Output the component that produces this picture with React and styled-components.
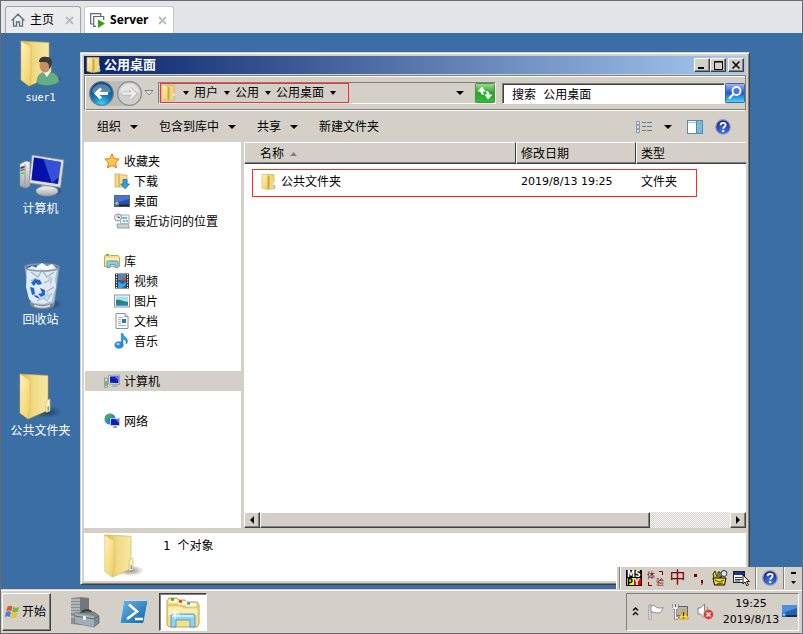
import React, { useState } from 'react';
import styled, { createGlobalStyle, css } from 'styled-components';

const GlobalStyle = createGlobalStyle`
  * {
    box-sizing: border-box;
  }

  body {
    margin: 0;
    font-family: "DejaVu Sans Mono", "Noto Sans CJK SC", sans-serif;
    font-size: 12px;
    line-height: 16px;
    color: #000;
  }

  button, input {
    font: inherit;
    color: inherit;
    border: none;
    padding: 0;
    margin: 0;
    background: none;
  }

  svg {
    display: block;
    flex: none;
  }
`;

// Classic raised / sunken edges
const raised = css`
  background: #d4d0c8;
  border: 1px solid;
  border-color: #fff #404040 #404040 #fff;
  box-shadow: inset -1px -1px 0 #808080;
`;

const sunken = css`
  border: 1px solid;
  border-color: #808080 #fff #fff #808080;
`;

const Screen = styled.div`
  min-height: 100vh;
  display: flex;
  flex-direction: column;
  border: 1px solid #6a6a70;
  background: #d4d0c8;
`;

/* ---------- tabs ---------- */

const TabBar = styled.div`
  display: flex;
  align-items: flex-end;
  gap: 3px;
  height: 32px;
  padding-left: 4px;
  background: #e4e5e8;
`;

const Tab = styled.div`
  display: flex;
  align-items: center;
  height: 27px;
  padding: 0 6px 0 5px;
  border: 1px solid #a3a4a8;
  border-bottom: none;
  border-radius: 3px 3px 0 0;
  background: ${props => (props.$active ? '#fff' : '#ebecee')};
  border-color: ${props => (props.$active ? '#c6c7ca' : '#a3a4a8')};
`;

const TabButton = styled.button`
  display: flex;
  align-items: center;
  gap: 5px;
  font-family: "Open Sans", "Noto Sans CJK SC", sans-serif;
  font-weight: ${props => (props.$active ? 700 : 400)};
`;

const TabClose = styled.button`
  margin-left: ${props => (props.$active ? '9px' : '11px')};
`;

/* ---------- desktop ---------- */

const Desktop = styled.main`
  position: relative;
  flex: 1;
  display: flex;
  padding: 0 52px 4px 0;
  background: #3a6ea5;
`;

const Shortcuts = styled.div`
  display: flex;
  flex-direction: column;
  align-items: center;
  gap: 42px;
  width: 79px;
  padding-top: 6px;
  flex: none;
`;

const Shortcut = styled.button`
  display: flex;
  flex-direction: column;
  align-items: center;
  gap: 1px;
  color: #fff;
  line-height: 20px;
  white-space: nowrap;
`;

const Latin = styled.span`
  font-size: 10px;
`;

const Window = styled.section`
  flex: 1;
  min-width: 0;
  display: flex;
  flex-direction: column;
  margin-top: 19px;
  padding: 3px;
  border: 1px solid;
  border-color: #d4d0c8 #404040 #404040 #d4d0c8;
  box-shadow: inset 1px 1px 0 #fff, inset -1px -1px 0 #808080;
  background: #d4d0c8;
`;

const TitleBar = styled.header`
  display: flex;
  align-items: center;
  height: 18px;
  margin-bottom: 1px;
  padding: 0 2px;
  background: linear-gradient(90deg, #0a246a, #a6caf0);
`;

const Title = styled.h1`
  flex: 1;
  margin: 0 0 0 2px;
  font-size: 13px;
  line-height: 18px;
  color: #fff;
`;

const TitleButton = styled.button`
  ${raised}
  width: 16px;
  height: 14px;
  margin-left: ${props => (props.$apart ? '2px' : '0')};
  display: flex;
  align-items: center;
  justify-content: center;
`;

const AddressBand = styled.div`
  display: flex;
  align-items: center;
  height: 36px;
  padding-left: 4px;
  border: 1px solid #808080;
  box-shadow: inset 1px 1px 0 #fff, inset 0 -1px 0 #808080;
  border-bottom-color: #fff;
`;

const NavButtons = styled.div`
  display: flex;
  gap: 3px;
  border-radius: 13px;
  background: #bebcb6;
`;

const History = styled.button`
  width: 10px;
  margin: 0 4px 0 2px;
`;

const AddressField = styled.div`
  ${sunken}
  flex: 1;
  display: flex;
  align-items: center;
  height: 22px;
  padding-left: 1px;
`;

const Crumbs = styled.nav`
  display: flex;
  align-items: center;
  align-self: stretch;
  padding-right: 7px;
  border: 1px solid #ff2a2a;
`;

const Crumb = styled.button`
  display: flex;
  align-items: center;
  line-height: 18px;
`;

const CrumbArrow = styled.span`
  display: flex;
  justify-content: center;
  width: 17px;
`;

const AddressDrop = styled.button`
  margin-left: auto;
  padding: 0 11px;
`;

const Search = styled.form`
  display: flex;
  align-items: center;
  width: 243px;
  margin-left: 6px;
`;

const SearchInput = styled.input`
  ${sunken}
  flex: 1;
  min-width: 0;
  height: 21px;
  padding: 0 9px;
  background: #fff;
  box-shadow: inset 1px 1px 0 #404040;
`;

const Toolbar = styled.div`
  display: flex;
  align-items: center;
  gap: 21px;
  height: 31px;
  padding: 0 15px 0 13px;
`;

const ToolButton = styled.button`
  display: flex;
  align-items: center;
  gap: ${props => (props.$wide ? '12px' : '9px')};
  padding-right: ${props => (props.$wide ? '3px' : '0')};
`;

const ToolIcons = styled.div`
  display: flex;
  align-items: center;
  gap: 12px;
  margin-left: auto;
`;

const Body = styled.div`
  flex: 1;
  display: flex;
  gap: 3px;
`;

const Sidebar = styled.nav`
  width: 157px;
  padding: 9px 0 0 1px;
  background: #fff;
`;

const Group = styled.div`
  margin-bottom: 20px;
`;

const Place = styled.a`
  display: flex;
  align-items: center;
  gap: 4px;
  height: 20px;
  padding-left: ${props => (props.$child ? '29px' : '19px')};
  color: #000;
  text-decoration: none;
  background: ${props => (props.$selected ? '#d4d0c8' : 'none')};
`;

const PlaceLabel = styled.span`
  padding-top: 2px;
`;

const ListPane = styled.div`
  flex: 1;
  min-width: 0;
  display: flex;
  flex-direction: column;
  background: #fff;
`;

const ListArea = styled.div`
  position: relative;
  flex: 1;
`;

const FileTable = styled.table`
  width: 100%;
  table-layout: fixed;
  border-collapse: separate;
  border-spacing: 0;
`;

const HeadCell = styled.th`
  width: ${props => props.$width || 'auto'};
  height: 22px;
  padding: 1px 4px 0 ${props => (props.$first ? '15px' : '4px')};
  text-align: left;
  font-weight: 400;
  background: #d4d0c8;
  border-top: 1px solid #fff;
  border-left: 1px solid #fff;
  border-bottom: 1px solid #404040;
  border-right: ${props => (props.$width ? '1px solid #404040' : 'none')};
  box-shadow: inset 0 -1px 0 #808080;
`;

const SortLabel = styled.span`
  display: flex;
  align-items: center;
  gap: 6px;
`;

const Cell = styled.td`
  height: 34px;
  padding: 1px 6px 0 ${props => (props.$first ? '17px' : '5px')};
  ${props => props.$latin && css`
    font-family: "DejaVu Sans", sans-serif;
    font-size: 11px;
  `}
`;

const FileName = styled.span`
  display: flex;
  align-items: center;
  gap: 4px;
`;

// Red frame laid over the folder row
const Highlight = styled.div`
  position: absolute;
  top: 27px;
  left: 8px;
  right: 49px;
  height: 28px;
  border: 1px solid #ff2a2a;
  pointer-events: none;
`;

const ScrollBar = styled.div`
  display: flex;
  height: 16px;
  background: repeating-conic-gradient(#d4d0c8 0% 25%, #fff 0% 50%) 0 0 / 2px 2px;
`;

const ScrollButton = styled.button`
  ${raised}
  width: 16px;
  display: flex;
  align-items: center;
  justify-content: center;
`;

const ScrollTrack = styled.div`
  flex: 1;
  display: flex;
`;

const ScrollThumb = styled.div`
  ${raised}
  width: 83%;
`;

const Details = styled.footer`
  display: flex;
  gap: 17px;
  height: 48px;
  margin-top: 5px;
  padding-left: 17px;
  background: #fff;
`;

const DetailsText = styled.p`
  margin: 5px 0 0;
`;

/* ---------- language bar & taskbar ---------- */

const LanguageBar = styled.div`
  position: absolute;
  right: 0;
  bottom: 0;
  display: flex;
  align-items: center;
  height: 22px;
  padding-left: 2px;
  background: #d4d0c8;
  border-left: 1px solid #fff;
`;

const LangGroup = styled.div`
  display: flex;
  align-items: center;
  gap: 5px;
  height: 22px;
  padding: 0 5px 0 6px;
  border-left: 1px solid #808080;
  box-shadow: inset 1px 0 0 #fff;
`;

const LangMode = styled.button`
  width: 17px;
  font-size: 16px;
  line-height: 20px;
  color: #800000;
`;

const TaskBar = styled.footer`
  display: flex;
  align-items: center;
  height: 44px;
  padding: 0 3px 0 1px;
  border-top: 1px solid #d4d0c8;
  box-shadow: inset 0 1px 0 #fff;
`;

const StartButton = styled.button`
  ${raised}
  display: flex;
  align-items: center;
  gap: 1px;
  width: 49px;
  height: 38px;
  padding-left: 2px;
  margin-right: 9px;
`;

const TaskButton = styled.button`
  display: flex;
  align-items: center;
  justify-content: center;
  width: 48px;
  height: 38px;
  margin-left: 1px;
  ${props => props.$open && css`
    border: 1px solid;
    border-color: #404040 #fff #fff #404040;
    box-shadow: inset 1px 1px 0 #808080;
    background: #fff;
  `}
`;

const Tray = styled.div`
  ${sunken}
  display: flex;
  align-items: center;
  gap: 8px;
  height: 38px;
  margin-left: auto;
  padding: 0 1px 0 5px;
`;

const ClockArea = styled.div`
  display: flex;
  align-items: center;
  gap: 1px;
`;

const Clock = styled.time`
  width: 58px;
  font-family: "DejaVu Sans", sans-serif;
  font-size: 11px;
  text-align: center;
`;

/* ---------- icons ---------- */

const Gradients = () => (
  <svg width="0" height="0" style={{ position: 'absolute' }} aria-hidden="true">
    <defs>
      <linearGradient id="folderBack" x1="0" x2="1">
        <stop offset="0" stopColor="#d8b548" />
        <stop offset=".45" stopColor="#f0da86" />
        <stop offset="1" stopColor="#f8e9a6" />
      </linearGradient>
      <linearGradient id="folderFront" x1="0" x2="1" y2="1">
        <stop offset="0" stopColor="#fff4bb" />
        <stop offset="1" stopColor="#efcd62" />
      </linearGradient>
      <linearGradient id="metal" x1="0" x2="0" y1="0" y2="1">
        <stop offset="0" stopColor="#f6f6f6" />
        <stop offset="1" stopColor="#a2a5a8" />
      </linearGradient>
      <radialGradient id="navBlue" cx=".5" cy=".95" r=".9">
        <stop offset="0" stopColor="#36d4ff" />
        <stop offset=".45" stopColor="#1679b8" />
        <stop offset="1" stopColor="#0f3f72" />
      </radialGradient>
      <linearGradient id="greenBtn" x1="0" x2="0" y1="0" y2="1">
        <stop offset="0" stopColor="#9fdf90" />
        <stop offset=".5" stopColor="#27a52b" />
        <stop offset="1" stopColor="#2fc133" />
      </linearGradient>
      <linearGradient id="searchBtn" x1="0" x2="0" y1="0" y2="1">
        <stop offset="0" stopColor="#a9b9f0" />
        <stop offset=".5" stopColor="#2255cf" />
        <stop offset="1" stopColor="#49e2f5" />
      </linearGradient>
      <linearGradient id="skyBlue" x1="0" x2="1" y2="1">
        <stop offset="0" stopColor="#6db5e6" />
        <stop offset="1" stopColor="#0b62a8" />
      </linearGradient>
      <radialGradient id="helpBlue" cx=".5" cy=".8" r=".8">
        <stop offset="0" stopColor="#3f7cf0" />
        <stop offset="1" stopColor="#14228c" />
      </radialGradient>
      <radialGradient id="shade">
        <stop offset="0" stopColor="#000" stopOpacity=".45" />
        <stop offset="1" stopColor="#000" stopOpacity="0" />
      </radialGradient>
    </defs>
  </svg>
);

const BigFolder = ({ size = 48, user }) => (
  <svg width={size} height={size} viewBox="0 0 48 48">
    <ellipse cx="31" cy="40" rx="15" ry="6" fill="url(#shade)" />
    <path d="M4 2l28 1.500V28l1 1v9l-21 9z" fill="url(#folderBack)" stroke="#c9a544" strokeWidth=".6" />
    <path d="M31 28l3-1v12l-4 1.500V30z" fill="#fdf3c4" stroke="#d6b350" strokeWidth=".7" />
    <path d="M31.500 34.500H33v4h-1.500z" fill="#4aa3ee" />
    <path d="M4 2l10 6v29l-2 10-8-6z" fill="url(#folderFront)" stroke="#dcb955" strokeWidth=".6" />
    {user && (
      <g>
        <path d="M20 44c0-7 3-10 8-11h6c5 1 8 5 8 10-5 4-17 5-22 1z" fill="#64ad85" stroke="#3e8464" strokeWidth=".6" />
        <path d="M26 33l4 5 4-6z" fill="#e9f4ef" />
        <ellipse cx="28" cy="26" rx="5.500" ry="7.500" fill="#c98e61" />
        <path d="M22 23c0-5 4-6 8-5 5 0 6 5 4 9-1 3-2 4-2 1 0-4-2-5-5-5-2 0-4 0-5 0z" fill="#383a3c" />
      </g>
    )}
  </svg>
);

const ComputerBig = () => (
  <svg width="48" height="48" viewBox="0 0 48 48">
    <ellipse cx="34" cy="41" rx="13" ry="5" fill="url(#shade)" />
    <path d="M3 14l6-3 4 1v24l-4 2-6-2z" fill="url(#metal)" stroke="#8d9195" strokeWidth=".7" />
    <path d="M8 14v22" stroke="#9a9da0" />
    <path d="M3.500 17l4-1v2l-4 1zM3.500 20l4-1v1l-4 1z" fill="#3c4246" />
    <circle cx="5.500" cy="23" r="1.300" fill="#38e02c" />
    <path d="M25 33h10l1 7H24z" fill="#b5b8ba" />
    <ellipse cx="30" cy="41" rx="11" ry="5" fill="url(#metal)" stroke="#9a9da1" strokeWidth=".7" />
    <path d="M15 5l32 5-3.500 27.500L12 33z" fill="#dcdee0" stroke="#85898d" strokeWidth=".8" />
    <path d="M17 7.500l27 4.500-3 22L14.500 30z" fill="#0616b4" />
    <path d="M26 9l18 3-2 15-7 6z" fill="#527cf0" opacity=".6" />
    <path d="M17 7.500l10 1.600 7 23.700-19.500-2.800z" fill="#0510a0" opacity=".55" />
  </svg>
);

const BinBig = () => (
  <svg width="48" height="48" viewBox="0 0 48 48">
    <ellipse cx="34" cy="43" rx="12" ry="5" fill="url(#shade)" />
    <path d="M8 7h34l-5 37c-5 4-19 4-23 0z" fill="#b5cde4" fillOpacity=".85" stroke="#8298b0" strokeWidth=".7" />
    <path d="M10 8l5-3 5 2 5-5 5 4 6-2 4 4-2 10 1 8-3 8-1 6-8 3-10-1-5-4-3-12z" fill="#dfeaf5" />
    <path d="M14 11l7 5 4-7 5 7 7-5M27 22l8-4M29 31l8-5M14 20l5-3M31 38l4-6M20 40l6-3 5 3" stroke="#9db5cc" strokeWidth="1.300" fill="none" />
    <path d="M30 14l6 3-2 8zM25 37l6-6 3 5z" fill="#bdd0e2" />
    <path d="M14 22l4-4 5 1 2 4-4 1-2-2-2 3zM13 26l4 1 1 6-3 1zM17 34l4 1 2 3-5-2zM23 27l5 2 0 5-4 2-3-3 4-1z" fill="#2366c9" />
    <ellipse cx="25" cy="6.500" rx="17" ry="3.500" fill="none" stroke="#8d959c" strokeWidth="1.400" />
    <path d="M20 5l5-3 5 3 5-2 3 3-9 3-10-1z" fill="#f5f8fb" />
    <path d="M13 41c5 4 20 4 25 0l-1 4c-5 4-18 4-23 0z" fill="#85898c" />
    <path d="M17 44.500c5 2 12 2 16 0" stroke="#e1e1e1" strokeWidth="1.500" fill="none" />
  </svg>
);

const SmallFolder = () => (
  <svg width="16" height="16" viewBox="0 0 16 16">
    <path d="M6 .5h7v11l1 .5v2.500L7 15.500z" fill="#efd680" stroke="#d3b352" strokeWidth=".7" />
    <path d="M1 .5h4.500l1.500 1v13l-1 1-5-1.500z" fill="url(#folderFront)" stroke="#dab95a" strokeWidth=".7" />
    <path d="M6.700 1.500v13.500l1.800-1V2.500z" fill="#c9a443" />
    <path d="M12 8.500h1.500v5H12z" fill="#fff8d2" />
    <path d="M12.500 11h1v2.500h-1z" fill="#4aa3ee" />
  </svg>
);

const Triangle = ({ w = 7, color = '#000' }) => (
  <svg width={w} height="4" viewBox="0 0 8 4" preserveAspectRatio="none">
    <path d="M0 0h8L4 4z" fill={color} />
  </svg>
);

const NavArrow = ({ back }) => (
  <svg width="25" height="25" viewBox="0 0 25 25">
    <circle cx="12.500" cy="12.500" r="11.800" fill={back ? 'url(#navBlue)' : '#cfcfcd'} stroke={back ? '#657f98' : '#8b8b89'} strokeWidth="1.200" />
    <path d="M3 11a9.600 9.600 0 0 1 19 0c-5 2-14 2-19 0z" fill="#fff" opacity={back ? '.28' : '.45'} />
    <path
      d={back ? 'M19 12.500H7.500M12 7.500l-5 5 5 5' : 'M6 12.500h11.500M13 7.500l5 5-5 5'}
      fill="none"
      stroke={back ? '#fff' : '#b4b4b2'}
      strokeWidth={back ? '2.800' : '4'}
    />
    {!back && (
      <path d="M6 12.500h11.500M13 7.500l5 5-5 5" fill="none" stroke="#efefee" strokeWidth="2.400" />
    )}
  </svg>
);

const RefreshIcon = () => (
  <svg width="20" height="20" viewBox="0 0 20 20">
    <rect x=".5" y=".5" width="19" height="19" rx="1" fill="url(#greenBtn)" stroke="#4d8e50" />
    <path d="M7 3.500L2.500 8.500h3c0 2.500 1.500 3.500 4 3.500-1-.8-1.300-1.800-1.200-3.500h2.200zM13 16.500l4.500-5h-3c0-2.500-1.500-3.500-4-3.500 1 .8 1.300 1.800 1.200 3.500H9.500z" fill="#fff" />
  </svg>
);

const SearchIcon = () => (
  <svg width="20" height="20" viewBox="0 0 20 20">
    <rect x=".5" y=".5" width="19" height="19" rx="1" fill="url(#searchBtn)" stroke="#4063a8" />
    <circle cx="11.500" cy="8" r="4" fill="#4b78df" stroke="#fff" strokeWidth="1.800" />
    <path d="M8.500 11L4 15.500" stroke="#fff" strokeWidth="2.200" />
  </svg>
);

const HelpIcon = () => (
  <svg width="16" height="16" viewBox="0 0 16 16">
    <circle cx="8" cy="8" r="7.300" fill="url(#helpBlue)" stroke="#9aa2b8" strokeWidth="1.200" />
    <path d="M5.600 6.200c0-3.200 5-3.100 5-.3 0 1.900-2.400 1.800-2.400 3.800" fill="none" stroke="#fff" strokeWidth="1.800" />
    <rect x="7.200" y="11" width="2" height="2" fill="#fff" />
  </svg>
);

const ViewIcon = () => (
  <svg width="16" height="12" viewBox="0 0 16 12">
    {[0, 4, 8].map((y) => (
      <g key={y}>
        <rect x=".5" y={y + 0.5} width="3" height="3" fill="#fff" stroke="#8b9fbe" />
        <rect x="1.500" y={y + 1.5} width="1" height="1" fill={y === 4 ? '#e22' : '#48c'} />
        <path d={`M6 ${y + 1.5}h4M11 ${y + 1.5}h5`} stroke="#6d7688" />
      </g>
    ))}
  </svg>
);

const PreviewIcon = () => (
  <svg width="16" height="14" viewBox="0 0 16 14">
    <rect x=".5" y=".5" width="15" height="13" fill="#fff" stroke="#5a86b5" />
    <path d="M1 2.500h14" stroke="#a5c3de" />
    <rect x="10" y="1" width="5" height="12" fill="#75bcd8" />
    <path d="M9.500 1v12" stroke="#5a86b5" />
  </svg>
);

const smallIcons = {
  star: (
    <path d="M8 .8l2.200 4.700 5 .7-3.600 3.500.9 5.200L8 12.500l-4.500 2.400.9-5.200L.8 6.200l5-.7z" fill="#ffc94d" stroke="#dd7a25" />
  ),
  download: (
    <g>
      <path d="M1 1h5l2 1h5v12H1z" fill="#f3dd8b" stroke="#cfae52" strokeWidth=".8" />
      <path d="M5 2v12" stroke="#d4b357" strokeWidth="1.500" />
      <path d="M9 6.500h4V11h2.500L11 15.700 6.700 11H9z" fill="#2da0e4" stroke="#1670b5" strokeWidth=".8" />
    </g>
  ),
  desktop: (
    <g>
      <rect x=".5" y="2.500" width="15" height="11" fill="#2550b0" stroke="#596675" />
      <path d="M1 3h14v3L1 10z" fill="#4576d2" />
      <rect x="5" y="11.500" width="10" height="2" fill="#1b2738" />
      <circle cx="3" cy="10.500" r="1.700" fill="#e9c23c" />
      <circle cx="3.700" cy="11.200" r="1" fill="#2ca6ea" />
    </g>
  ),
  recent: (
    <g>
      <path d="M5 2h10v9H7z" fill="#f5f7f9" stroke="#a3abb2" />
      <path d="M8 5h5M9 8h2M12 8h2" stroke="#4aa5dd" strokeWidth="1.500" />
      <path d="M3 11h11l1.500 4h-12z" fill="#cfd2d5" stroke="#9a9fa4" />
      <circle cx="4" cy="4.500" r="3.500" fill="#e9edf0" stroke="#8f989f" />
      <path d="M4 2.500v2h2" fill="none" stroke="#5a646c" />
    </g>
  ),
  library: (
    <g>
      <path d="M.5 3.500l1-2h4l1 1h7.500l1.500 2v9H.5z" fill="#f3df8e" stroke="#c7a548" />
      <path d="M2.500 2.500h2" stroke="#3fae3a" strokeWidth="1.200" />
      <path d="M1 6h14" stroke="#fff6c8" strokeWidth="1.500" />
      <path d="M3 14.500V9.500c0-1 .5-1.500 1.500-1.500h8c1 0 1.500.5 1.500 1.500v5h-3v-3H6v3z" fill="#8accee" stroke="#4797c3" strokeWidth=".8" />
    </g>
  ),
  video: (
    <g>
      <rect x="1" y=".5" width="14" height="15" fill="#2c3034" />
      <path d="M2.500 1v14M13.500 1v14" stroke="#fff" strokeWidth="1.200" strokeDasharray="1.300 1.300" />
      <rect x="4" y="1" width="8" height="6.500" fill="#3e92d4" />
      <rect x="4" y="8.500" width="8" height="6.500" fill="#3ba1e4" />
      <path d="M4 1l4 4 4-3v5.500H9L7 6z" fill="#c4593c" />
      <path d="M4 8.500h8l-3 2.500zM8 15l4-3v3z" fill="#1c5c98" />
    </g>
  ),
  picture: (
    <g>
      <rect x=".5" y="2" width="15" height="12" fill="#fff" stroke="#8d9499" />
      <rect x="2" y="3.500" width="12" height="9" fill="#a4def3" />
      <path d="M2 7c4-1 7 2 12 2v3.500H2z" fill="#2f8060" />
      <path d="M2 10h12v2.500H2z" fill="#2b7ec0" />
    </g>
  ),
  document: (
    <g>
      <path d="M2 .5h9l3 3v12H2z" fill="#fff" stroke="#8d959c" />
      <path d="M11 .5v3h3" fill="#dfe4e9" stroke="#8d959c" />
      <path d="M4 4.500h5M4 6.500h3M4 8.500h3M4 10.500h3M4 12.500h8" stroke="#a8b6c6" />
      <rect x="8" y="6" width="4" height="4" fill="#3274b8" />
    </g>
  ),
  music: (
    <g>
      <ellipse cx="5" cy="12" rx="4.200" ry="3.200" fill="#2993dc" stroke="#1a68ac" strokeWidth=".6" />
      <path d="M7.300 12V.5h1.500c.5 3 5 4 4.700 8-.2 1.500-1 2-1.500 2.500.6-3-1-4.500-3-5V12z" fill="#2f9be2" stroke="#1a68ac" strokeWidth=".5" />
      <ellipse cx="4" cy="11" rx="1.800" ry="1" fill="#a5dcfa" />
    </g>
  ),
  computer: (
    <g>
      <rect x=".5" y="5" width="3" height="9.500" fill="#d5d8da" stroke="#85898d" strokeWidth=".7" />
      <rect x="1.200" y="8" width="1.600" height="5" fill="#38c92e" />
      <path d="M4.500 2.500L15.500 2v9.500l-11-.5z" fill="#e2e5e8" stroke="#85898d" strokeWidth=".7" />
      <path d="M6 3.500l8.500-.3v7L6 9.800z" fill="#0e1fc0" />
      <path d="M10 3.400l4.500-.2v4z" fill="#4f7cf0" />
      <path d="M7 14l2-2h3l2 2z" fill="#a8abae" />
    </g>
  ),
  network: (
    <g>
      <circle cx="6" cy="6" r="5.500" fill="#2b83d8" />
      <path d="M2 3c2-2 4-2.500 6-2L7 4 4 5 3 8 1 7zM7 6l3-1 1 3-3 2z" fill="#44b53c" />
      <rect x="6.500" y="5.500" width="9" height="7" fill="#0e1fc0" stroke="#c3c8cd" />
      <path d="M11 6h4v4z" fill="#4f7cf0" />
      <path d="M8.500 15l1-2h3l1 2z" fill="#9da1a5" />
    </g>
  ),
};

const SmallIcon = ({ name }) => (
  <svg width="16" height="16" viewBox="0 0 16 16">{smallIcons[name]}</svg>
);

const CloseMark = () => (
  <svg width="9" height="9" viewBox="0 0 9 9">
    <path d="M1 1l7 7M8 1L1 8" stroke="#bbbcbf" strokeWidth="2" />
  </svg>
);

const HomeIcon = () => (
  <svg width="14" height="14" viewBox="0 0 14 14">
    <path d="M.6 7.500L7 1.200l6.400 6.300M2.500 6.500v6.700h3V9h3v4.200h3V6.500" fill="none" stroke="#5d6e80" strokeWidth="1.300" />
  </svg>
);

const MachineIcon = () => (
  <svg width="15" height="15" viewBox="0 0 15 15">
    <path d="M3 11H.7V.7h10V3M6 13.300H3.700V3.500h10V7" fill="none" stroke="#55687c" strokeWidth="1.200" />
    <path d="M8 6.500l7 4-7 4.500z" fill="#3f9a1c" />
  </svg>
);

const WindowsFlag = () => (
  <svg width="16" height="16" viewBox="0 0 16 16">
    <path d="M2.500 2.500c2-1.200 3.500-1 5 0L6.200 7.300c-1.500-1-3-1-5 0z" fill="#e8572a" />
    <path d="M8.300 3c1.800 1 3.700 1 6 0l-1.500 4.800c-2 1-4 1-5.700 0z" fill="#7db93c" />
    <path d="M1 8.200c2-1.200 3.500-1 5 0l-1.400 4.800c-1.500-1-3-1-4.600 0z" fill="#3b86d8" />
    <path d="M6.800 8.700c1.800 1 3.700 1 5.800 0l-1.400 4.800c-2 1-4 1-5.800 0z" fill="#f5bf2e" />
  </svg>
);

const ServerManagerIcon = () => (
  <svg width="30" height="32" viewBox="0 0 30 32">
    <path d="M1 2l9-1v28l-9-1z" fill="#8b9093" />
    <path d="M10 1l9 1v24l-9 3z" fill="#72787b" />
    <path d="M1 4h9M1 7h9M1 10h9M1 13h9M1 16h9M1 21h9" stroke="#d3d6d7" strokeWidth="1.200" />
    <path d="M12 18c0-5 9-5 10 0" fill="none" stroke="#34393c" strokeWidth="1.800" />
    <path d="M5 17l19-1 5 4v7l-5 4-19-4z" fill="#7d8890" stroke="#586067" strokeWidth=".7" />
    <path d="M5 17l19 3v11L5 27z" fill="#a2aeb5" />
    <path d="M5 20l19 3 5-3" fill="none" stroke="#5f686e" />
    <rect x="13" y="20" width="3" height="4" fill="#e9edef" />
  </svg>
);

const PowerShellIcon = () => (
  <svg width="30" height="26" viewBox="0 0 30 26">
    <path d="M6 1.500h21c1.500 0 2 .6 1.700 2L25 22.500c-.4 1.300-1 2-2.500 2H3c-1.300 0-2-.7-1.700-2L4.500 3c.2-1 .6-1.500 1.500-1.500z" fill="url(#skyBlue)" stroke="#c4dced" />
    <path d="M10 5.500l8 7-10 7.500M16 20h8" fill="none" stroke="#fff" strokeWidth="2.500" />
  </svg>
);

const ExplorerIcon = () => (
  <svg width="34" height="32" viewBox="0 0 34 32">
    <path d="M1 5l2-3h8l2 2h6l2 2h10l2 3v19l-2 3H3l-2-2z" fill="#f4df8f" stroke="#c2a148" />
    <path d="M2 9h13l2 2h15" fill="none" stroke="#d4b457" />
    <path d="M2 11h13l2 2h14v6H2z" fill="#fbedad" />
    <path d="M3 5h8M12 7h9M20 9h10" stroke="#fffbe6" strokeWidth="3" />
    <path d="M5 3.500h3" stroke="#25b62a" strokeWidth="2.500" />
    <path d="M13 5.500h3" stroke="#d9362a" strokeWidth="2.500" />
    <path d="M21 7.500h3" stroke="#2f9fe8" strokeWidth="2.500" />
    <path d="M5 31V20c0-1.500.7-2 2-2h20c1.300 0 2 .5 2 2v11h-5v-7H10v7z" fill="#93d1ef" stroke="#4e9fc9" />
    <path d="M7 20h20" stroke="#dff4fd" strokeWidth="1.500" />
    <path d="M9 13v10M4 18h10M6 15l6 6M12 15l-6 6" stroke="#fff" strokeWidth=".9" />
  </svg>
);

const MspyIcon = () => (
  <svg width="16" height="16" viewBox="0 0 16 16" fontFamily="DejaVu Sans" fontSize="8" fontWeight="700">
    <rect width="16" height="16" fill="#000" />
    <rect x="1" y="8" width="7" height="7" fill="#ff0" />
    <rect x="8" y="8" width="7" height="7" fill="#e00" />
    <text x="1" y="7" fill="#fff">MS</text>
    <text x="1" y="15" fill="#000">P</text>
    <text x="8" y="15" fill="#fff">Y</text>
  </svg>
);

const TrialIcon = () => (
  <svg width="17" height="17" viewBox="0 0 17 17" fontFamily="Noto Sans CJK SC" fontSize="8" fill="#800000" overflow="visible">
    <text x="0" y="8">体</text>
    <text x="9" y="15">验</text>
    <path d="M12 1.500h3.500V5M1.500 12v3.500H5" fill="none" stroke="#800000" />
  </svg>
);

const PunctIcon = () => (
  <svg width="16" height="16" viewBox="0 0 16 16">
    <path d="M3 4h3v3H3zM10 10h2v3l-1 2h-1l1-2h-1z" fill="#800000" />
  </svg>
);

const ToolboxIcon = () => (
  <svg width="16" height="16" viewBox="0 0 16 16">
    <path d="M2 8l-1-4 2-3 2 6M6 7V2h2v5" fill="#e6d020" stroke="#000" strokeWidth=".8" />
    <circle cx="12" cy="3.500" r="3" fill="#d5e3ea" stroke="#333" />
    <path d="M10 6L7 9" stroke="#333" strokeWidth="1.500" />
    <path d="M1 8h13l-1.500 7h-10z" fill="#f2e02c" stroke="#000" />
    <path d="M3 10l4 2 5-2M5 14l6-1" stroke="#000" strokeWidth=".7" fill="none" />
  </svg>
);

const MenuIcon = () => (
  <svg width="17" height="16" viewBox="0 0 17 16">
    <rect x=".5" y="1.500" width="11" height="11" fill="#fff" stroke="#222" />
    <rect x="1" y="2" width="10" height="3" fill="#1c2ba0" />
    <path d="M2 7.500h7M2 9.500h7M2 11h5" stroke="#333" />
    <path d="M10 5v9l2-2 2 4 1.500-1-2-3.500h3z" fill="#fff" stroke="#000" strokeWidth=".9" />
  </svg>
);

const Chevrons = () => (
  <svg width="7" height="9" viewBox="0 0 7 9">
    <path d="M1 3.500L3.500 1 6 3.500M1 8l2.500-2.500L6 8" fill="none" stroke="#000" strokeWidth="1.400" />
  </svg>
);

const FlagIcon = () => (
  <svg width="17" height="16" viewBox="0 0 17 16">
    <path d="M2 1h2v15H2z" fill="#fff" stroke="#777" strokeWidth=".7" />
    <path d="M4 2c3-1.500 4 .5 6 1.500 2 .8 3.500.7 6 0-1 3-2 5.500-5 5.500-2.500 0-4-1.500-7-1z" fill="#fff" stroke="#777" strokeWidth=".8" />
  </svg>
);

const NetworkTray = () => (
  <svg width="17" height="17" viewBox="0 0 17 17">
    <rect x="4.500" y="3.500" width="11" height="9" fill="#b3b3b0" stroke="#666" />
    <path d="M6 14.500h7" stroke="#666" strokeWidth="1.500" />
    <path d="M2 1v4M5 1v4M1 5h5M3.500 5v10H6" fill="none" stroke="#666" strokeWidth="3" />
    <path d="M2 1v4M5 1v4M1 5h5M3.500 5v10H6" fill="none" stroke="#fff" strokeWidth="1.500" />
    <path d="M11.500 6l5 10h-10z" fill="#ffd83b" stroke="#b98b12" strokeWidth=".7" />
    <path d="M11.500 9v4M11.500 14v1.200" stroke="#222" strokeWidth="1.300" />
  </svg>
);

const VolumeTray = () => (
  <svg width="17" height="17" viewBox="0 0 17 17">
    <path d="M1 5h2.500l4-4v14l-4-4H1z" fill="#fff" stroke="#777" strokeWidth=".9" />
    <path d="M10 4c1 2 1 5 0 7" fill="none" stroke="#888" />
    <circle cx="11.500" cy="11.500" r="5" fill="#dc3a30" stroke="#f3b8b2" strokeWidth=".7" />
    <path d="M9.500 9.500l4 4M13.500 9.500l-4 4" stroke="#fff" strokeWidth="1.600" />
  </svg>
);

const ShowDesktop = () => (
  <svg width="16" height="13" viewBox="0 0 16 13">
    <rect x="1" width="15" height="12" fill="#2561b8" />
    <path d="M1 0h15v3L1 8z" fill="#4f8fdc" />
    <rect x="5" y="10" width="11" height="2" fill="#1f2f48" />
    <circle cx="3" cy="9.500" r="1.500" fill="#4fd0f0" />
  </svg>
);

/* ---------- data ---------- */

const shortcuts = [
  { label: 'suer1', icon: <BigFolder user />, latin: true },
  { label: '计算机', icon: <ComputerBig /> },
  { label: '回收站', icon: <BinBig /> },
  { label: '公共文件夹', icon: <BigFolder /> },
];

const places = [
  [
    { label: '收藏夹', icon: 'star' },
    { label: '下载', icon: 'download', child: true },
    { label: '桌面', icon: 'desktop', child: true },
    { label: '最近访问的位置', icon: 'recent', child: true },
  ],
  [
    { label: '库', icon: 'library' },
    { label: '视频', icon: 'video', child: true },
    { label: '图片', icon: 'picture', child: true },
    { label: '文档', icon: 'document', child: true },
    { label: '音乐', icon: 'music', child: true },
  ],
  [{ label: '计算机', icon: 'computer' }],
  [{ label: '网络', icon: 'network' }],
];

const tools = [
  { label: '组织', menu: true },
  { label: '包含到库中', menu: true },
  { label: '共享', menu: true },
  { label: '新建文件夹' },
];

const Explorer = () => {
  const [query, setQuery] = useState('搜索 公用桌面');
  const [selected, setSelected] = useState('计算机');

  return (
    <Window>
      <TitleBar>
        <SmallFolder />
        <Title>公用桌面</Title>
        <TitleButton aria-label="最小化">
          <svg width="8" height="8"><path d="M0 6h6v2H0z" /></svg>
        </TitleButton>
        <TitleButton aria-label="最大化">
          <svg width="9" height="9"><path d="M.5 1v7.500h8V.5h-8M0 1h9" fill="none" stroke="#000" /></svg>
        </TitleButton>
        <TitleButton $apart aria-label="关闭">
          <svg width="8" height="8"><path d="M.5.500l7 7M7.500.500l-7 7" stroke="#000" strokeWidth="1.500" /></svg>
        </TitleButton>
      </TitleBar>

      <AddressBand>
        <NavButtons>
          <button aria-label="后退"><NavArrow back /></button>
          <button aria-label="前进"><NavArrow /></button>
        </NavButtons>
        <History aria-label="最近的页面">
          <svg width="10" height="6"><path d="M1 .5h8l-4 4.500z" fill="#e9e9e9" stroke="#808080" /></svg>
        </History>
        <AddressField>
          <Crumbs>
            <SmallFolder />
            <CrumbArrow><Triangle w={6} /></CrumbArrow>
            {['用户', '公用', '公用桌面'].map((name) => (
              <Crumb key={name}>
                {name}
                <CrumbArrow><Triangle w={6} /></CrumbArrow>
              </Crumb>
            ))}
          </Crumbs>
          <AddressDrop aria-label="以前的位置"><Triangle w={8} /></AddressDrop>
          <button aria-label="刷新"><RefreshIcon /></button>
        </AddressField>
        <Search onSubmit={(e) => e.preventDefault()}>
          <SearchInput
            aria-label="搜索"
            value={query}
            onChange={(e) => setQuery(e.target.value)}
          />
          <button type="submit" aria-label="开始搜索"><SearchIcon /></button>
        </Search>
      </AddressBand>

      <Toolbar>
        {tools.map((tool) => (
          <ToolButton key={tool.label}>
            {tool.label}
            {tool.menu && <Triangle w={8} />}
          </ToolButton>
        ))}
        <ToolIcons>
          <ToolButton $wide aria-label="更改视图"><ViewIcon /><Triangle w={8} /></ToolButton>
          <ToolButton aria-label="预览窗格"><PreviewIcon /></ToolButton>
          <ToolButton aria-label="帮助"><HelpIcon /></ToolButton>
        </ToolIcons>
      </Toolbar>

      <Body>
        <Sidebar>
          {places.map((group) => (
            <Group key={group[0].label}>
              {group.map((place) => (
                <Place
                  key={place.label}
                  href="#"
                  $child={place.child}
                  $selected={place.label === selected}
                  onClick={() => setSelected(place.label)}
                >
                  <SmallIcon name={place.icon} />
                  <PlaceLabel>{place.label}</PlaceLabel>
                </Place>
              ))}
            </Group>
          ))}
        </Sidebar>

        <ListPane>
          <ListArea>
            <FileTable>
              <thead>
                <tr>
                  <HeadCell $width="272px" $first>
                    <SortLabel>
                      名称
                      <svg width="7" height="4"><path d="M0 4h7L3.500 0z" fill="#808080" /></svg>
                    </SortLabel>
                  </HeadCell>
                  <HeadCell $width="120px">修改日期</HeadCell>
                  <HeadCell>类型</HeadCell>
                </tr>
              </thead>
              <tbody>
                <tr>
                  <Cell $first><FileName><SmallFolder />公共文件夹</FileName></Cell>
                  <Cell $latin>2019/8/13 19:25</Cell>
                  <Cell>文件夹</Cell>
                </tr>
              </tbody>
            </FileTable>
            <Highlight />
          </ListArea>
          <ScrollBar>
            <ScrollButton aria-label="向左">
              <svg width="4" height="8"><path d="M4 0v8L0 4z" /></svg>
            </ScrollButton>
            <ScrollTrack><ScrollThumb /></ScrollTrack>
            <ScrollButton aria-label="向右">
              <svg width="4" height="8"><path d="M0 0v8l4-4z" /></svg>
            </ScrollButton>
          </ScrollBar>
        </ListPane>
      </Body>

      <Details>
        <BigFolder size={45} />
        <DetailsText>1 个对象</DetailsText>
      </Details>
    </Window>
  );
};

const App = () => (
  <Screen>
    <GlobalStyle />
    <Gradients />

    <TabBar>
      <Tab>
        <TabButton><HomeIcon />主页</TabButton>
        <TabClose aria-label="关闭主页"><CloseMark /></TabClose>
      </Tab>
      <Tab $active>
        <TabButton $active><MachineIcon />Server</TabButton>
        <TabClose $active aria-label="关闭 Server"><CloseMark /></TabClose>
      </Tab>
    </TabBar>

    <Desktop>
      <Shortcuts>
        {shortcuts.map((item) => (
          <Shortcut key={item.label}>
            {item.icon}
            {item.latin ? <Latin>{item.label}</Latin> : item.label}
          </Shortcut>
        ))}
      </Shortcuts>

      <Explorer />

      <LanguageBar>
        <LangGroup>
          <MspyIcon />
          <TrialIcon />
          <LangMode>中</LangMode>
          <PunctIcon />
          <ToolboxIcon />
          <MenuIcon />
        </LangGroup>
        <LangGroup><HelpIcon /></LangGroup>
        <LangGroup>
          <svg width="7" height="13"><path d="M1 0h5v2H1zM1 9h5l-2.500 3z" /></svg>
        </LangGroup>
      </LanguageBar>
    </Desktop>

    <TaskBar>
      <StartButton><WindowsFlag />开始</StartButton>
      <TaskButton aria-label="服务器管理器"><ServerManagerIcon /></TaskButton>
      <TaskButton aria-label="PowerShell"><PowerShellIcon /></TaskButton>
      <TaskButton $open aria-label="资源管理器"><ExplorerIcon /></TaskButton>
      <Tray>
        <Chevrons />
        <FlagIcon />
        <NetworkTray />
        <VolumeTray />
        <ClockArea>
          <Clock>
            19:25
            <br />
            2019/8/13
          </Clock>
          <ShowDesktop />
        </ClockArea>
      </Tray>
    </TaskBar>
  </Screen>
);

export default App;
